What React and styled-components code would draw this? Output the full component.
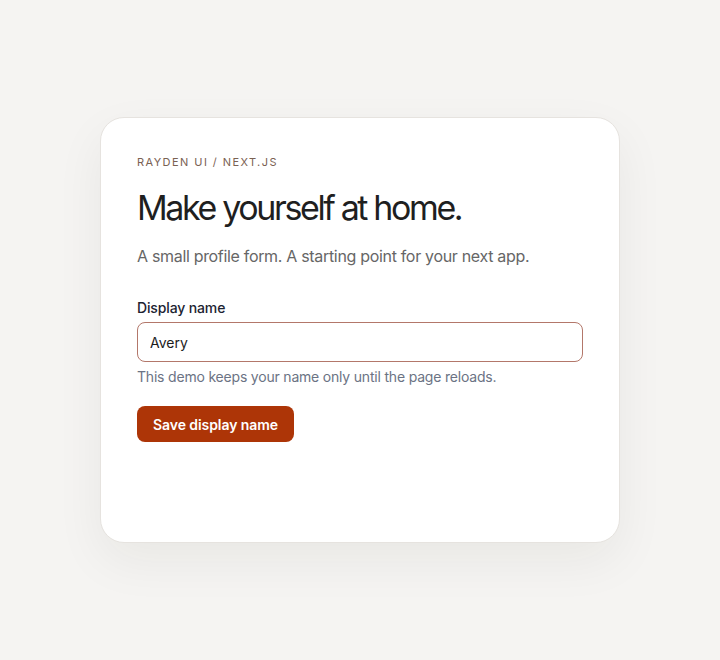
import React, { useState } from "react";
import styled, { createGlobalStyle } from "styled-components";

const GlobalStyle = createGlobalStyle`
  * { box-sizing: border-box; }
  html, body {
    margin: 0;
    padding: 0;
    background: #f5f4f2;
    font-family: Inter, "Noto Sans", Arial, sans-serif;
    -webkit-font-smoothing: antialiased;
  }
`;

const Page = styled.main`
  min-height: 100vh;
  display: flex;
  align-items: center;
  justify-content: center;
  padding: 24px;
`;

const Card = styled.section`
  width: 520px;
  min-height: 426px;
  background: #ffffff;
  border: 1px solid #e6e3df;
  border-radius: 24px;
  padding: 36px 36px;
  box-shadow: 0 18px 50px rgba(40, 30, 20, 0.06);
`;

const Eyebrow = styled.p`
  margin: 0;
  font-size: 11px;
  line-height: 16px;
  letter-spacing: 0.13em;
  text-transform: uppercase;
  color: #7a6152;
`;

const Title = styled.h1`
  margin: 16px 0 0;
  font-size: 34px;
  line-height: 44px;
  font-weight: 400;
  letter-spacing: -0.07em;
  color: #1f1f1f;
`;

const Lead = styled.p`
  margin: 14px 0 0;
  font-size: 16px;
  line-height: 24px;
  letter-spacing: -0.02em;
  color: #666666;
`;

const Form = styled.form`
  margin-top: 30px;
  display: flex;
  flex-direction: column;
`;

const Label = styled.label`
  font-size: 14px;
  line-height: 20px;
  font-weight: 500;
  letter-spacing: -0.01em;
  color: #1c2331;
`;

const Input = styled.input`
  margin-top: 4px;
  width: 100%;
  height: 40px;
  padding: 0 12px;
  font: inherit;
  font-size: 14px;
  color: #1c1c1c;
  border: 1px solid #b3776a;
  border-radius: 8px;
  outline: none;
  background: #fff;
`;

const Hint = styled.p`
  margin: 5px 0 0;
  font-size: 14px;
  line-height: 20px;
  letter-spacing: -0.014em;
  color: #6b7384;
`;

const Button = styled.button`
  margin-top: 19px;
  align-self: flex-start;
  height: 36px;
  padding: 0 16px;
  border: none;
  border-radius: 8px;
  background: #ad3507;
  color: #ffffff;
  font: inherit;
  font-size: 14px;
  font-weight: 600;
  letter-spacing: -0.005em;
  cursor: pointer;
`;

export default function App() {
  const [name, setName] = useState("Avery");

  return (
    <>
      <GlobalStyle />
      <Page>
        <Card>
          <Eyebrow>Rayden UI / Next.js</Eyebrow>
          <Title>Make yourself at home.</Title>
          <Lead>A small profile form. A starting point for your next app.</Lead>
          <Form onSubmit={(e) => e.preventDefault()}>
            <Label htmlFor="display-name">Display name</Label>
            <Input
              id="display-name"
              value={name}
              onChange={(e) => setName(e.target.value)}
            />
            <Hint>This demo keeps your name only until the page reloads.</Hint>
            <Button type="submit">Save display name</Button>
          </Form>
        </Card>
      </Page>
    </>
  );
}
